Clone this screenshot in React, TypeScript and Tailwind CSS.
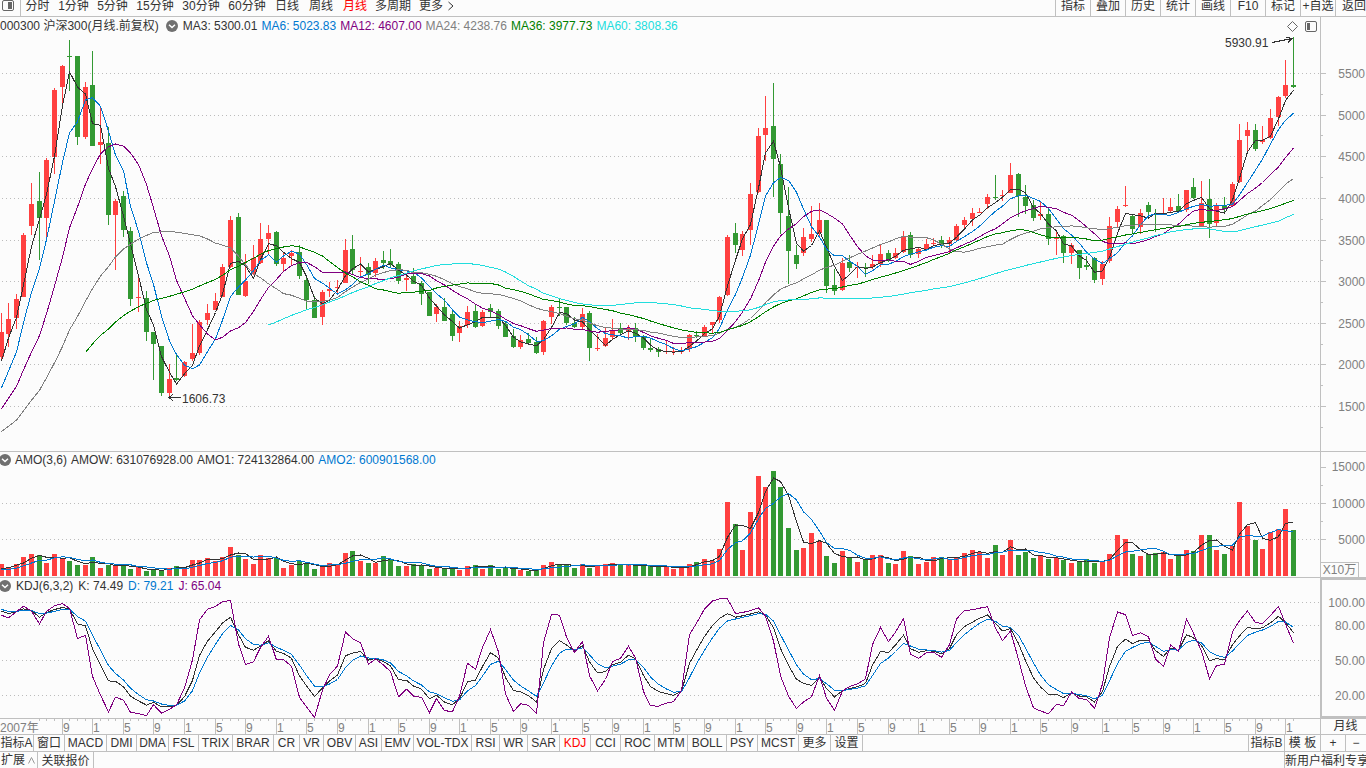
import { Fragment } from "react";

type Bar = { open: number; high: number; low: number; close: number; amount: number };

// closes of 2005-2006, they only feed the averages
const warmup = [
  955, 1043, 947, 932, 856, 878, 889, 928, 918, 877, 873, 923,
  1009, 1053, 1061, 1172, 1366, 1394, 1294, 1338, 1403, 1465, 1714, 2041,
];

// open, high, low, close, amount - one row per month from 2007-01
const monthly: number[][] = [
  [2089, 2617, 2041, 2385, 1640], [2361, 2733, 2205, 2544, 1090], [2553, 2841, 2421, 2781, 1640], [2805, 3577, 2805, 3558, 2590],
  [3659, 4175, 3561, 3928, 3000], [3963, 4307, 3249, 3764, 2870], [3755, 4475, 3533, 4461, 1770], [4491, 5319, 4283, 5296, 3000],
  [5339, 5603, 5063, 5580, 2460], [5703, 5903, 5279, 5688, 2050], [5711, 5711, 4631, 4737, 1500], [4727, 5399, 4703, 5338, 1500],
  [5363, 5771, 4619, 4620, 2590], [4631, 5075, 4403, 4674, 1090], [4655, 4847, 3671, 3790, 1500], [3791, 3983, 3129, 3959, 1500],
  [4019, 4079, 3537, 3611, 1500], [3609, 3657, 2697, 2791, 960], [2795, 3045, 2625, 2805, 1230], [2793, 2877, 2277, 2391, 680],
  [2385, 2385, 1809, 2243, 820], [2217, 2217, 1617, 1663, 820], [1657, 2001, 1607, 1829, 1090], [1835, 2121, 1800, 1817, 1360],
  [1857, 2040, 1845, 2032, 960], [2061, 2481, 2037, 2140, 2180], [2133, 2529, 2109, 2507, 2180], [2529, 2721, 2469, 2622, 2460],
  [2653, 2853, 2653, 2759, 2050], [2805, 3201, 2805, 3166, 2590], [3165, 3779, 3153, 3734, 3960], [3767, 3815, 2829, 2830, 2870],
  [2817, 3333, 2805, 3004, 2320], [3081, 3441, 3069, 3280, 1640], [3213, 3705, 3201, 3511, 2870], [3513, 3681, 3333, 3575, 2460],
  [3597, 3609, 3177, 3204, 2460], [3201, 3357, 3105, 3281, 1090], [3297, 3381, 3181, 3345, 1500], [3357, 3441, 3021, 3067, 2050],
  [3009, 3049, 2661, 2773, 1640], [2769, 2817, 2553, 2563, 960], [2565, 2889, 2469, 2868, 1230], [2877, 2985, 2805, 2903, 1770],
  [2913, 3009, 2853, 2935, 1640], [2973, 3513, 2973, 3379, 3140], [3393, 3561, 3081, 3136, 3410], [3120, 3285, 3045, 3128, 2050],
  [3165, 3213, 2961, 3076, 1770], [3093, 3273, 3045, 3239, 1770], [3249, 3369, 3141, 3223, 2730], [3237, 3393, 3153, 3192, 2180],
  [3201, 3225, 2961, 3001, 1360], [3009, 3081, 2877, 3044, 1360], [3057, 3153, 2961, 2972, 1640], [2973, 2997, 2709, 2846, 1500],
  [2865, 2865, 2577, 2581, 960], [2601, 2721, 2505, 2695, 1090], [2685, 2793, 2517, 2521, 1090], [2601, 2637, 2277, 2345, 960],
  [2373, 2517, 2265, 2464, 820], [2469, 2697, 2433, 2634, 1360], [2637, 2709, 2433, 2454, 1500], [2457, 2649, 2445, 2626, 960],
  [2673, 2721, 2565, 2632, 1500], [2637, 2661, 2421, 2461, 960], [2481, 2505, 2325, 2332, 1090], [2337, 2421, 2193, 2204, 960],
  [2205, 2349, 2181, 2293, 820], [2301, 2373, 2241, 2254, 680], [2265, 2325, 2121, 2139, 820], [2145, 2529, 2113, 2522, 1500],
  [2565, 2709, 2481, 2686, 1910], [2690, 2801, 2581, 2673, 1500], [2685, 2685, 2480, 2495, 1500], [2493, 2565, 2433, 2447, 1090],
  [2445, 2673, 2421, 2606, 1640], [2613, 2637, 2037, 2200, 1090], [2190, 2361, 2157, 2193, 1500], [2217, 2433, 2205, 2313, 1640],
  [2325, 2541, 2301, 2409, 1770], [2433, 2493, 2337, 2373, 1500], [2385, 2469, 2289, 2438, 1500], [2441, 2493, 2265, 2330, 1360],
  [2325, 2349, 2169, 2202, 1360], [2195, 2313, 2145, 2178, 1360], [2181, 2205, 2085, 2146, 1360], [2150, 2289, 2130, 2158, 1230],
  [2145, 2205, 2109, 2156, 960], [2155, 2205, 2121, 2165, 1090], [2181, 2361, 2145, 2350, 1640], [2355, 2397, 2313, 2338, 1910],
  [2337, 2469, 2337, 2450, 2320], [2469, 2513, 2373, 2508, 2050], [2529, 2817, 2493, 2808, 3690], [2830, 3550, 2818, 3533, 10100],
  [3574, 3694, 3334, 3434, 7100], [3370, 3598, 3298, 3572, 3550], [3610, 4174, 3430, 4051, 8740], [4066, 4846, 4054, 4749, 13650],
  [4762, 5230, 4450, 4840, 12150], [4870, 5380, 4006, 4473, 14330], [4414, 4534, 3562, 3816, 12150], [3778, 4126, 2962, 3366, 6550],
  [3310, 3430, 3142, 3202, 3550], [3334, 3634, 3298, 3534, 3820], [3502, 3898, 3466, 3566, 5870], [3574, 3934, 3526, 3731, 4780],
  [3730, 3730, 2854, 2946, 2730], [2950, 3142, 2830, 2877, 1770], [2890, 3274, 2878, 3218, 3410], [3226, 3310, 3106, 3156, 2460],
  [3160, 3226, 3034, 3169, 1910], [3172, 3214, 3046, 3153, 2180], [3166, 3310, 3142, 3203, 2870], [3202, 3430, 3166, 3327, 2870],
  [3334, 3370, 3226, 3253, 1770], [3274, 3394, 3262, 3336, 1640], [3346, 3598, 3334, 3538, 3410], [3550, 3586, 3274, 3310, 2730],
  [3322, 3406, 3274, 3387, 1640], [3382, 3502, 3358, 3452, 1910], [3450, 3514, 3430, 3456, 2590], [3490, 3538, 3394, 3439, 2590],
  [3442, 3526, 3322, 3492, 2320], [3490, 3682, 3466, 3666, 2590], [3670, 3766, 3622, 3737, 3140], [3742, 3874, 3658, 3822, 3550],
  [3830, 3874, 3814, 3836, 3280], [3923, 4043, 3863, 4006, 2460], [4015, 4271, 3971, 4006, 4230], [4023, 4091, 3959, 4030, 2870],
  [4055, 4415, 4055, 4275, 4910], [4283, 4295, 3767, 4023, 2870], [4007, 4151, 3803, 3898, 3280], [3911, 3971, 3719, 3756, 2460],
  [3779, 3947, 3731, 3802, 2730], [3803, 3887, 3431, 3510, 2320], [3512, 3611, 3311, 3517, 2460], [3539, 3551, 3215, 3334, 2180],
  [3335, 3455, 3203, 3438, 1770], [3371, 3371, 3023, 3153, 2050], [3190, 3299, 3131, 3172, 2320], [3275, 3287, 2975, 3010, 1770],
  [3023, 3239, 2951, 3201, 1910], [3239, 3767, 3215, 3669, 3000], [3707, 3903, 3647, 3872, 5600], [3910, 4139, 3887, 3913, 5050],
  [3779, 3803, 3563, 3629, 3000], [3647, 3863, 3563, 3825, 2730], [3911, 3947, 3755, 3835, 3000], [3812, 3863, 3587, 3799, 3140],
  [3805, 3995, 3803, 3814, 3280], [3839, 3995, 3815, 3886, 2320], [3899, 4043, 3815, 3828, 2730], [3851, 4100, 3827, 4096, 3550],
  [4127, 4235, 3983, 4003, 3410], [3647, 4199, 3647, 3940, 5600], [3983, 4223, 3515, 3686, 5600], [3695, 3935, 3663, 3912, 3550],
  [3900, 4007, 3827, 3867, 3000], [3905, 4187, 3900, 4163, 4100], [4187, 4883, 4175, 4695, 10100], [4739, 4907, 4559, 4816, 6830],
  [4811, 4883, 4559, 4587, 4910], [4667, 4859, 4643, 4695, 3690], [4715, 5063, 4703, 4960, 6010], [4967, 5219, 4859, 5211, 6420],
  [5219, 5663, 5195, 5352, 9150], [5352, 5931, 5327, 5337, 6310],
];

const LEAD = warmup.length;

const history: Bar[] = [
  ...warmup.map((close, i) => {
    const open = i ? warmup[i - 1] : close;
    return { open, close, high: Math.max(open, close), low: Math.min(open, close), amount: 680 };
  }),
  ...monthly.map(([open, high, low, close, amount]) => ({ open, high, low, close, amount })),
];
const bars = history.slice(LEAD);

const average = (values: number[], n: number) =>
  values
    .map((_, i) =>
      i < n - 1 ? null : values.slice(i - n + 1, i + 1).reduce((a, b) => a + b, 0) / n
    )
    .slice(LEAD);

const kdj = () => {
  let k = 50;
  let d = 50;
  const out = history.map((bar, i) => {
    const span = history.slice(Math.max(0, i - 5), i + 1);
    const top = Math.max(...span.map((b) => b.high));
    const bottom = Math.min(...span.map((b) => b.low));
    const rsv = top === bottom ? 50 : ((bar.close - bottom) / (top - bottom)) * 100;
    k = (rsv + 2 * k) / 3;
    d = (k + d) / 2;
    return { k, d, j: 3 * k - 2 * d };
  });
  return out.slice(LEAD);
};

const closes = history.map((b) => b.close);
const amounts = history.map((b) => b.amount);
const kdjValues = kdj();

const WIDTH = 1320;
const barX = (i: number) => Math.floor(1 + i * 7.647);
const priceY = (v: number) => 38.5 + (5500 - v) * 0.08325;
const amountY = (v: number) => 108 - v * 0.00733;
const kdjY = (v: number) => 8.5 + (100 - v) * 1.1625;

const UP = "#ff4040";
const DOWN = "#339933";

const movingAverages = [
  { label: "MA3: 5300.01", n: 3, color: "#333333", text: "text-[#333333]" },
  { label: "MA6: 5023.83", n: 6, color: "#0078d0", text: "text-[#0078d0]" },
  { label: "MA12: 4607.00", n: 12, color: "#800080", text: "text-[#800080]" },
  { label: "MA24: 4238.76", n: 24, color: "#808080", text: "text-[#808080]" },
  { label: "MA36: 3977.73", n: 36, color: "#008000", text: "text-[#008000]" },
  { label: "MA60: 3808.36", n: 60, color: "#22dddd", text: "text-[#22dddd]" },
];

const Line = ({ values, y, color }: { values: (number | null)[]; y: (v: number) => number; color: string }) => (
  <polyline
    fill="none"
    stroke={color}
    points={values
      .map((v, i) => (v === null ? "" : `${barX(i) + 0.5},${y(v).toFixed(1)}`))
      .filter(Boolean)
      .join(" ")}
  />
);

const GridLines = ({ rows }: { rows: number[] }) => (
  <>
    {rows.map((y) => (
      <line key={y} x1={2} x2={1319} y1={Math.floor(y) + 0.5} y2={Math.floor(y) + 0.5} stroke="#bcbcbc" strokeDasharray="1 3" />
    ))}
  </>
);

const Plot = ({ height, className, label, children }: { height: number; className: string; label: string; children: React.ReactNode }) => (
  <svg
    role="img"
    aria-label={label}
    viewBox={`0 0 ${WIDTH} ${height}`}
    preserveAspectRatio="none"
    shapeRendering="crispEdges"
    className={`block w-full ${className}`}
  >
    {children}
  </svg>
);

const LegendToggle = ({ label }: { label: string }) => (
  <button aria-label={label} className="shrink-0">
    <svg viewBox="0 0 12 12" className="block size-3">
      <circle cx="6" cy="6" r="6" fill="#707070" />
      <path d="M3 4.8l3 2.7 3-2.7" fill="none" stroke="#fff" strokeWidth="1.5" />
    </svg>
  </button>
);

const periods = [
  { name: "分时", width: "w-[33px]" },
  { name: "1分钟", width: "w-[39px]" },
  { name: "5分钟", width: "w-[39px]" },
  { name: "15分钟", width: "w-[46px]" },
  { name: "30分钟", width: "w-[46px]" },
  { name: "60分钟", width: "w-[46px]" },
  { name: "日线", width: "w-[34px]" },
  { name: "周线", width: "w-[34px]" },
  { name: "月线", width: "w-[34px]" },
  { name: "多周期", width: "w-[42px]" },
  { name: "更多", width: "w-[34px]" },
];

const tools = ["指标", "叠加", "历史", "统计", "画线", "F10", "标记", "+自选"];

const Toolbar = () => (
  <header className="flex h-[17px] border-b border-[#c0c0c0] leading-[13px]">
    <button aria-label="侧栏" className="w-5 shrink-0">
      <svg viewBox="0 0 20 16" className="block h-4 w-5">
        <rect x="2.5" y="0.5" width="11" height="10" rx="1.5" fill="none" stroke="#666" />
        <rect x="8" y="2" width="4" height="7" fill="#666" />
      </svg>
    </button>
    <nav className="flex min-w-0 flex-1 border-l border-[#c0c0c0]">
      {periods.map((p) => (
        <button
          key={p.name}
          className={`flex shrink-0 justify-center whitespace-nowrap ${p.width} ${p.name === "月线" ? "text-[#ff0000]" : ""}`}
        >
          {p.name}
        </button>
      ))}
      <svg viewBox="0 0 6 10" className="mt-px h-[10px] w-[6px] shrink-0">
        <path d="M0.5 1l4.5 4-4.5 4" fill="none" stroke="#333" />
      </svg>
    </nav>
    <div className="flex shrink-0">
      {tools.map((t) => (
        <button key={t} className="flex w-[35px] justify-center whitespace-nowrap border-l border-[#c0c0c0]">
          {t}
        </button>
      ))}
      <button className="flex w-[31px] justify-end whitespace-nowrap border-l border-[#c0c0c0]">返回</button>
    </div>
  </header>
);

const PricePanel = () => {
  const levels = [5500, 5000, 4500, 4000, 3500, 3000, 2500, 2000, 1500];
  return (
    <section className="flex border-b border-[#c0c0c0]">
      <div className="min-w-0 flex-1">
        <div className="flex h-[18px] items-center gap-[5px] whitespace-nowrap">
          <h1 className="pr-[2px]">000300 沪深300(月线.前复权)</h1>
          <LegendToggle label="MA" />
          <div className="flex gap-1">
            {movingAverages.map((m) => (
              <span key={m.n} className={m.text}>
                {m.label}
              </span>
            ))}
          </div>
          <div className="ml-auto flex items-center gap-[7px] pr-[3px]">
            <svg viewBox="0 0 11 11" className="size-[11px]">
              <path d="M5.5 0.5l5 5-5 5-5-5z" fill="none" stroke="#666" />
            </svg>
            <svg viewBox="0 0 12 11" className="h-[11px] w-3">
              <rect x="0.5" y="0.5" width="11" height="10" rx="1.5" fill="none" stroke="#666" />
              <rect x="2" y="2" width="3" height="7" fill="#666" />
            </svg>
          </div>
        </div>
        <Plot height={416} className="h-[416px]" label="沪深300 月线">
          <GridLines rows={levels.map(priceY)} />
          {bars.map((b, i) => {
            const x = barX(i);
            const fill = b.close < b.open ? DOWN : UP;
            const top = Math.floor(priceY(Math.max(b.open, b.close)) + 0.1);
            const bottom = Math.floor(priceY(Math.min(b.open, b.close)) + 0.1);
            const high = Math.floor(priceY(b.high) + 0.1);
            const low = Math.floor(priceY(b.low) + 0.1);
            return (
              <Fragment key={i}>
                <rect x={x} y={high} width={1} height={Math.max(1, low - high)} fill={fill} />
                <rect x={x - 2} y={top} width={5} height={Math.max(1, bottom - top)} fill={fill} />
              </Fragment>
            );
          })}
          {movingAverages.map((m) => (
            <Line key={m.n} values={average(closes, m.n)} y={priceY} color={m.color} />
          ))}
          <g fill="none" stroke="#333">
            <path d="M181 362.5H169M173 359l-4 3.5 4 3.5" />
            <path d="M1272 7.5L1292 3.5M1286 2l6 1.5-4 4" />
          </g>
          <g fill="#333" fontSize={12}>
            <text x={182} y={368}>1606.73</text>
            <text x={1225} y={12}>5930.91</text>
          </g>
        </Plot>
      </div>
      <svg viewBox="0 0 46 434" className="block h-[434px] w-[46px] shrink-0" fill="#808080" fontSize={12}>
        <g fill="#c0c0c0">
          <rect width={1} height={434} />
          {levels.map((v) => (
            <Fragment key={v}>
              <rect x={1} y={Math.floor(priceY(v)) + 18} width={5} height={1} />
              <rect x={1} y={Math.floor(priceY(v - 250)) + 18} width={2} height={1} />
            </Fragment>
          ))}
        </g>
        {levels.map((v) => (
          <text key={v} x={45} y={Math.floor(priceY(v)) + 23} textAnchor="end">
            {v}
          </text>
        ))}
      </svg>
    </section>
  );
};

const AmountPanel = () => (
  <section className="flex border-b border-[#c0c0c0]">
    <div className="min-w-0 flex-1">
      <div className="-ml-px flex h-4 items-center gap-1 whitespace-nowrap">
        <LegendToggle label="AMO" />
        <span>AMO(3,6)</span>
        <span>AMOW: 631076928.00</span>
        <span>AMO1: 724132864.00</span>
        <span className="text-[#0078d0]">AMO2: 600901568.00</span>
      </div>
      <Plot height={109} className="h-[109px]" label="AMO">
        <GridLines rows={[35, 71]} />
        {bars.map((b, i) => {
          const top = Math.round(amountY(b.amount));
          return <rect key={i} x={barX(i) - 2} y={top} width={5} height={108 - top} fill={b.close < b.open ? DOWN : UP} />;
        })}
        <Line values={average(amounts, 3)} y={amountY} color="#333333" />
        <Line values={average(amounts, 6)} y={amountY} color="#0078d0" />
      </Plot>
    </div>
    <div className="w-[46px] shrink-0 border-l border-[#c0c0c0] text-[#808080]">
      <svg viewBox="0 0 45 110" className="block h-[110px] w-[45px]" fill="#808080" fontSize={12}>
        <g fill="#c0c0c0">
          <rect y={15} width={5} height={1} />
          <rect y={33} width={2} height={1} />
          <rect y={51} width={5} height={1} />
          <rect y={69} width={2} height={1} />
          <rect y={87} width={5} height={1} />
        </g>
        <g textAnchor="end">
          <text x={44} y={19}>15000</text>
          <text x={44} y={56}>10000</text>
          <text x={44} y={92}>5000</text>
        </g>
      </svg>
      <div className="flex h-[15px] w-[38px] items-center justify-center border-r border-t border-[#c0c0c0] whitespace-nowrap">X10万</div>
    </div>
  </section>
);

const KdjPanel = () => {
  const levels = [100, 80, 50, 20];
  return (
    <section className="flex border-b border-[#c0c0c0]">
      <div className="min-w-0 flex-1">
        <div className="-ml-px flex h-4 items-center gap-[5px] whitespace-nowrap">
          <LegendToggle label="KDJ" />
          <span>KDJ(6,3,2)</span>
          <span>K: 74.49</span>
          <span className="text-[#0078d0]">D: 79.21</span>
          <span className="text-[#800080]">J: 65.04</span>
        </div>
        <Plot height={124} className="h-[124px]" label="KDJ">
          <GridLines rows={levels.map(kdjY)} />
          <Line values={kdjValues.map((v) => v.k)} y={kdjY} color="#333333" />
          <Line values={kdjValues.map((v) => v.d)} y={kdjY} color="#0078d0" />
          <Line values={kdjValues.map((v) => v.j)} y={kdjY} color="#800080" />
        </Plot>
      </div>
      <div className="w-[46px] shrink-0 border-2 border-r-0 border-[#c0c0c0]">
        <svg viewBox="0 0 44 136" className="block h-[136px] w-11" fill="#808080" fontSize={12} textAnchor="end">
          {levels.map((v) => (
            <text key={v} x={43} y={Math.floor(kdjY(v)) + 19}>
              {v.toFixed(2)}
            </text>
          ))}
        </svg>
      </div>
    </section>
  );
};

const TimeAxis = () => (
  <div className="flex border-b border-[#c0c0c0]">
    <div className="min-w-0 flex-1">
      <Plot height={15} className="h-[15px]" label="时间轴">
        {bars.map((_, i) => {
          if (i < 5) return null;
          const major = i >= 8 && i % 4 === 0;
          return <rect key={i} x={barX(i)} y={0} width={1} height={major ? 15 : 2} fill="#c0c0c0" />;
        })}
        <g fill="#808080" fontSize={12}>
          <text x={0} y={13}>2007年</text>
          {bars.map((_, i) =>
            i >= 8 && i % 4 === 0 ? (
              <text key={i} x={barX(i) + 1} y={13}>
                {(i % 12) + 1}
              </text>
            ) : null
          )}
        </g>
      </Plot>
    </div>
    <button className="w-[46px] shrink-0 border-l border-[#c0c0c0] pl-1">月线</button>
  </div>
);

const indicators = [
  { name: "指标A", width: "w-[34px]" },
  { name: "窗口", width: "w-[31px]" },
  { name: "MACD", width: "w-[42px]" },
  { name: "DMI", width: "w-[30px]" },
  { name: "DMA", width: "w-[32px]" },
  { name: "FSL", width: "w-[30px]" },
  { name: "TRIX", width: "w-[34px]" },
  { name: "BRAR", width: "w-[41px]" },
  { name: "CR", width: "w-[26px]" },
  { name: "VR", width: "w-[24px]" },
  { name: "OBV", width: "w-[32px]" },
  { name: "ASI", width: "w-[26px]" },
  { name: "EMV", width: "w-[32px]" },
  { name: "VOL-TDX", width: "w-[58px]" },
  { name: "RSI", width: "w-[28px]" },
  { name: "WR", width: "w-[28px]" },
  { name: "SAR", width: "w-[32px]" },
  { name: "KDJ", width: "w-[31px]" },
  { name: "CCI", width: "w-[30px]" },
  { name: "ROC", width: "w-[34px]" },
  { name: "MTM", width: "w-[33px]" },
  { name: "BOLL", width: "w-[39px]" },
  { name: "PSY", width: "w-[31px]" },
  { name: "MCST", width: "w-[41px]" },
  { name: "更多", width: "w-[32px]" },
  { name: "设置", width: "w-[32px]" },
];

const IndicatorTabs = () => (
  <div className="flex h-[17px] border-b border-[#c0c0c0]">
    <nav className="flex min-w-0 flex-1 overflow-hidden">
      {indicators.map((t) => (
        <button
          key={t.name}
          className={`flex shrink-0 items-center justify-center whitespace-nowrap border-r border-[#c0c0c0] ${t.width} ${t.name === "KDJ" ? "text-[#ff0000]" : ""}`}
        >
          {t.name}
        </button>
      ))}
    </nav>
    <div className="flex shrink-0">
      <button className="w-9 whitespace-nowrap border-l border-[#c0c0c0]">指标B</button>
      <button className="w-9 whitespace-nowrap border-l border-[#c0c0c0]">模 板</button>
      <button className="w-[25px] border-l border-[#c0c0c0]">+</button>
      <button className="w-[21px] border-l border-[#c0c0c0]">−</button>
    </div>
  </div>
);

const Footer = () => (
  <footer className="flex h-4 leading-[18px]">
    <button className="flex w-[38px] shrink-0 items-center gap-[3px] border-r border-[#c0c0c0] pl-px whitespace-nowrap">
      扩展
      <svg viewBox="0 0 7 7" className="size-[7px] shrink-0">
        <path d="M0.5 6.5l3-6 3 6" fill="none" stroke="#999" />
      </svg>
    </button>
    <button className="w-14 shrink-0 border-r border-[#c0c0c0] whitespace-nowrap">关联报价</button>
    <a href="#welfare" className="ml-auto w-[82px] shrink-0 border-l border-[#c0c0c0] whitespace-nowrap">
      新用户福利专享
    </a>
  </footer>
);

export default function App() {
  return (
    <main className="min-h-screen w-full overflow-hidden bg-[#fcfcfc] font-['Liberation_Sans','Noto_Sans_CJK_SC',sans-serif] text-[12px] leading-[15px] text-[#333333]">
      <Toolbar />
      <PricePanel />
      <AmountPanel />
      <KdjPanel />
      <TimeAxis />
      <IndicatorTabs />
      <Footer />
    </main>
  );
}
